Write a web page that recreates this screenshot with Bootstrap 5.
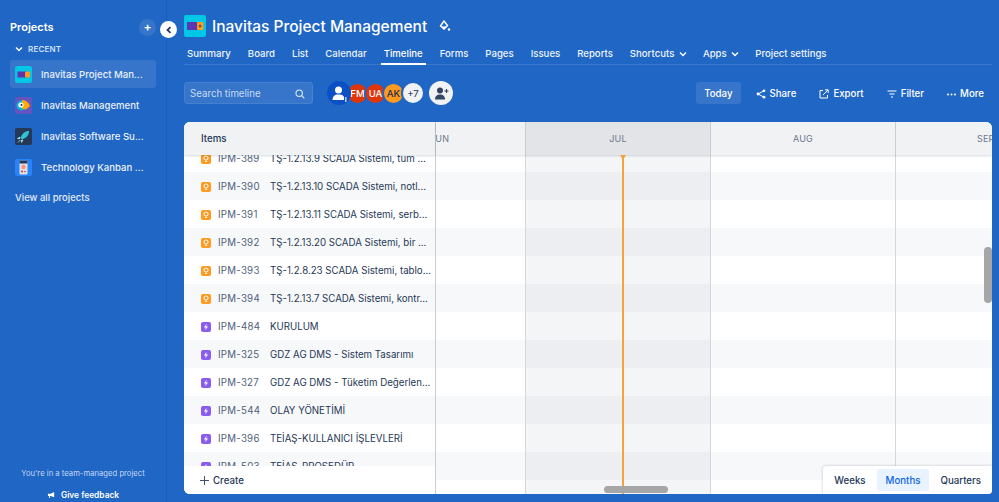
<!DOCTYPE html>
<html lang="en">
<head>
    <meta charset="UTF-8">
    <title>Inavitas Project Management - Timeline</title>
    <link rel="stylesheet" href="https://cdn.jsdelivr.net/npm/bootstrap@5.3.2/dist/css/bootstrap.min.css">
    <style>
        html, body { height: 502px; overflow: hidden; }
        body { font-family: Inter, "Noto Sans", sans-serif; font-size: 9.7px; background: #2066c4; color: #fff; }
        .page-wrap { height: 502px; position: relative; }

        /* sidebar */
        .side-bar { width: 167px; flex: none; background: #2066c4; border-right: 1px solid #1d5db3; padding: 0 10px; }
        .side-title { height: 16px; margin-top: 19px; font-size: 11px; font-weight: 600; }
        .side-add { width: 17px; height: 17px; border-radius: 50%; background: rgba(255,255,255,.1); color: #fff; font-size: 12px; line-height: 16px; text-align: center; }
        .side-collapse { position: absolute; left: 160px; top: 21px; width: 17px; height: 17px; border-radius: 50%; background: #fff; z-index: 5; }
        .side-recent { height: 12px; margin-top: 8px; padding-left: 5px; font-size: 8px; font-weight: 600; color: #cfe0f7; letter-spacing: .2px; gap: 5px; }
        .side-list { margin-top: 5px; }
        .side-item { height: 28px; margin-bottom: 3px; padding-left: 5px; border-radius: 3px; font-size: 9.6px; font-weight: 500; color: #eaf1fb; white-space: nowrap; gap: 9px; }
        .side-item.is-on { background: rgba(255,255,255,.1); }
        .side-item svg { flex: none; }
        .side-item span { padding-top: 2px; }
        .side-all { margin-top: 7px; padding-left: 5px; font-size: 9.5px; font-weight: 500; color: #e1ebf9; }
        .side-foot { margin-top: auto; text-align: center; }
        .side-note { font-size: 7.7px; color: #c4d7f2; margin-bottom: 8px; }
        .side-feedback { font-size: 8.4px; font-weight: 600; height: 14px; gap: 5px; }

        /* project header */
        .main-area { min-width: 0; padding: 15px 7px 8px 17px; }
        .proj-title { height: 22px; font-size: 15.5px; font-weight: 500; white-space: nowrap; }
        .proj-name { margin-left: 6px; padding-top: 2px; }
        .proj-paint { margin-left: 12px; }
        .tab-line { height: 27px; margin-top: 1px; padding-left: 3px; border-bottom: 1px solid #3a78cc; font-size: 9.6px; font-weight: 500; white-space: nowrap; color: #eef4fc; gap: 17px; }
        .tab-item { height: 27px; line-height: 32px; }
        .tab-item.is-on { padding: 0 3px; margin: 0 -3px; border-bottom: 2px solid #fff; color: #fff; }
        .tab-item svg { margin-left: 2px; margin-right: -1px; }
        .tool-line { height: 22px; margin-top: 17px; }
        .find-box { width: 129px; height: 22px; border: 1px solid #4580d0; background: rgba(255,255,255,.1); border-radius: 3px; padding: 2px 7px 0 5px; color: #cadcf5; }
        .ava-row { margin-left: 14px; }
        .ava-dot { width: 23px; height: 23px; border-radius: 50%; margin-right: -5px; border: 2px solid #2066c4; padding-top: 2px; font-size: 9.6px; font-weight: 500; flex: none; }
        .ava-me { width: 24px; height: 24px; padding-top: 0; background: #0b50c4; border-color: #0b50c4; position: relative; z-index: 1; }
        .ava-red { background: #de350b; color: #fff; }
        .ava-amber { background: #ff991f; color: #172b4d; }
        .ava-more { width: 24px; height: 24px; margin-left: 1px; background: #f1f2f4; color: #42526e; }
        .ava-add { width: 24px; height: 24px; border-radius: 50%; background: #f1f2f4; margin-left: 9px; }
        .tool-group { gap: 7px; }
        .tool-btn { height: 22px; padding: 2px 8px 0; border-radius: 3px; font-weight: 500; color: #fff; gap: 4px; }
        .tool-btn.is-on { background: rgba(255,255,255,.1); }

        /* timeline panel */
        .time-panel { height: 372px; margin-top: 18px; background: #fff; border-radius: 6px 6px 4px 6px; overflow: hidden; position: relative; }
        .list-col { width: 252px; flex: none; border-right: 1px solid #c9ced6; background: #fff; position: relative; z-index: 2; }
        .list-head { height: 33px; background: #f1f2f4; padding: 2px 0 0 17px; color: #253858; font-weight: 500; position: relative; z-index: 3; box-shadow: 0 1px 2px rgba(9,30,66,.16); flex: none; }
        .list-rows { flex: 1; min-height: 0; overflow: hidden; margin-top: -11px; }
        .issue-row { height: 28px; padding: 2px 0 0 17px; color: #253858; white-space: nowrap; }
        .issue-row:nth-child(even), .lane-row:nth-child(even) { background: #f7f8f9; }
        .issue-key { width: 52px; margin-left: 7px; color: #505f79; flex: none; letter-spacing: .25px; }
        .list-foot { height: 28px; background: #fff; padding-left: 15px; font-weight: 500; color: #253858; flex: none; position: relative; gap: 3px; }
        .list-foot span { padding-top: 2px; }
        .issue-ico { width: 10px; height: 10px; flex: none; }

        .lane-col { min-width: 0; position: relative; }
        .lane-head { height: 33px; background: #f1f2f4; color: #6b778c; font-size: 9px; letter-spacing: .2px; position: relative; z-index: 3; box-shadow: 0 1px 2px rgba(9,30,66,.16); }
        .month-cell { flex: none; height: 100%; border-right: 1px solid #c9ced6; overflow: hidden; white-space: nowrap; }
        .month-jun { width: 90px; }
        .month-jun span { margin-left: -6px; }
        .month-wide { width: 185px; }
        .month-jul { background: #e3e4e8; }
        .month-sep { padding-left: 81px; }
        .lane-rows { margin-top: -11px; }
        .lane-row { height: 28px; }
        .month-band { position: absolute; top: 33px; bottom: 0; border-right: 1px solid #d3d7de; z-index: 1; }
        .band-jun { left: 0; width: 90px; }
        .band-jul { left: 90px; width: 185px; background: rgba(9,30,66,.045); }
        .band-aug { left: 275px; width: 185px; }
        .today-line { position: absolute; left: 186px; top: 33px; bottom: 0; width: 2px; background: #f0a440; z-index: 4; }
        .today-tip { position: absolute; left: -2px; top: 0; width: 0; height: 0; border-left: 3px solid transparent; border-right: 3px solid transparent; border-top: 5px solid #f0a440; }
        .scroll-y { position: absolute; right: 0; top: 125px; width: 8px; height: 56px; border-radius: 4px; background: #a6a6a6; z-index: 5; }
        .scroll-x { position: absolute; left: 168px; bottom: 1px; width: 64px; height: 7px; border-radius: 4px; background: #a6a6a6; z-index: 5; }
        .range-box { position: absolute; right: 0; bottom: 0; height: 28px; background: #fff; border-radius: 3px 0 0 0; box-shadow: 0 0 3px rgba(9,30,66,.25); padding: 0 2px; z-index: 6; font-weight: 500; color: #253858; }
        .range-btn { height: 22px; padding: 2px 9px 0; border-radius: 3px; }
        .range-btn.is-on { background: #e9f2ff; color: #0c66e4; margin: 0 2px; }
    </style>
</head>

<body>
    <svg width="0" height="0" class="position-absolute">
        <symbol id="ico-idea" viewBox="0 0 10 10">
            <rect width="10" height="10" rx="2" fill="#ff991f"/>
            <circle cx="5" cy="4" r="2.1" fill="none" stroke="#fff" stroke-width="1"/>
            <path d="M4 7.4h2" stroke="#fff" stroke-width="1"/>
        </symbol>
        <symbol id="ico-epic" viewBox="0 0 10 10">
            <rect width="10" height="10" rx="2" fill="#8b5cf0"/>
            <path d="M5.6 1.8 3 5.5h1.8L4.3 8.2 7 4.5H5.2z" fill="#fff"/>
        </symbol>
        <symbol id="ico-down" viewBox="0 0 8 6">
            <path d="M1 1.5 4 4.5 7 1.5" fill="none" stroke="#fff" stroke-width="1.4"/>
        </symbol>
    </svg>

    <div class="page-wrap d-flex">
        <div class="side-bar d-flex flex-column">
            <div class="side-title d-flex justify-content-between align-items-center">
                <span>Projects</span>
                <span class="side-add">+</span>
            </div>
            <div class="side-recent d-flex align-items-center">
                <svg width="8" height="6"><use href="#ico-down"></use></svg>
                <span>RECENT</span>
            </div>
            <div class="side-list">
                <div class="side-item is-on d-flex align-items-center">
                    <svg width="17" height="17" viewBox="0 0 17 17"><rect width="17" height="17" rx="2" fill="#00c7e6"/><rect x="2.5" y="5.5" width="9" height="6" fill="#5e35b1"/><rect x="10" y="5.5" width="5" height="6" rx="1" fill="#ff991f"/></svg>
                    <span>Inavitas Project Man...</span>
                </div>
                <div class="side-item d-flex align-items-center">
                    <svg width="17" height="17" viewBox="0 0 17 17"><rect width="17" height="17" rx="2" fill="#6554c0"/><circle cx="6.5" cy="8.5" r="5" fill="#00b8d9"/><path d="M7 3c4 0 7 3 8 6l-4 3.5-4-1z" fill="#ffab00"/><circle cx="6" cy="8" r="2.6" fill="#fff"/><circle cx="6.5" cy="8" r="1" fill="#172b4d"/></svg>
                    <span>Inavitas Management</span>
                </div>
                <div class="side-item d-flex align-items-center">
                    <svg width="17" height="17" viewBox="0 0 17 17"><rect width="17" height="17" rx="2" fill="#253858"/><path d="M14 3c-4 0-7 2.5-8.5 7l1.5 1.5C11.500 10 14 7 14 3z" fill="#2ec4d6"/><path d="M5 9 2.5 10.500l2 .5zM8 12l-1.500 2.500-.5-2zM5 12l-2 2.500" fill="#b3f0f7" stroke="#b3f0f7" stroke-width=".6"/></svg>
                    <span>Inavitas Software Su...</span>
                </div>
                <div class="side-item d-flex align-items-center">
                    <svg width="17" height="17" viewBox="0 0 17 17"><rect width="17" height="17" rx="2" fill="#2684ff"/><rect x="4.5" y="1.5" width="8" height="14" rx="1" fill="#dfe1e6"/><rect x="4.5" y="1.5" width="8" height="3" fill="#253858"/><circle cx="8.5" cy="8" r="2.2" fill="#ff8f73"/><circle cx="7" cy="12.5" r="1" fill="#de350b"/><circle cx="10" cy="12.5" r=".8" fill="#de350b"/></svg>
                    <span>Technology Kanban ...</span>
                </div>
            </div>
            <div class="side-all">View all projects</div>
            <div class="side-foot">
                <div class="side-note">You're in a team-managed project</div>
                <div class="side-feedback d-flex align-items-center justify-content-center">
                    <svg width="9" height="8" viewBox="0 0 10 9"><path d="M1 3h3l4-2v6L4 5.500H3l.5 2.500h-1L2 5.500H1z" fill="#fff"/></svg>
                    <span>Give feedback</span>
                </div>
            </div>
        </div>
        <div class="side-collapse d-flex align-items-center justify-content-center">
            <svg width="8" height="8" viewBox="0 0 8 8"><path d="M5.5 1.2 2.5 4l3 2.800" fill="none" stroke="#253858" stroke-width="1.8"/></svg>
        </div>

        <div class="main-area flex-grow-1 d-flex flex-column">
            <div class="proj-title d-flex align-items-center">
                <svg width="22" height="22" viewBox="0 0 22 22"><rect width="22" height="22" rx="2" fill="#00c7e6"/><rect x="3" y="7" width="13" height="8" fill="#5e35b1"/><rect x="13" y="7" width="6.5" height="8" rx="1" fill="#ff991f"/><path d="M14.500 11h3M16 9.500v3" stroke="#253858" stroke-width=".8"/></svg>
                <span class="proj-name">Inavitas Project Management</span>
                <svg class="proj-paint" width="12" height="13" viewBox="0 0 12 13"><path d="M5 1 1.500 6l3.500 3 3.500-3.500z" fill="none" stroke="#fff" stroke-width="1.4"/><path d="M2.500 6.500h6L5 9.500z" fill="#fff"/><circle cx="10" cy="9.500" r="1.200" fill="#fff"/></svg>
            </div>
            <div class="tab-line d-flex">
                <span class="tab-item">Summary</span>
                <span class="tab-item">Board</span>
                <span class="tab-item">List</span>
                <span class="tab-item">Calendar</span>
                <span class="tab-item is-on">Timeline</span>
                <span class="tab-item">Forms</span>
                <span class="tab-item">Pages</span>
                <span class="tab-item">Issues</span>
                <span class="tab-item">Reports</span>
                <span class="tab-item">Shortcuts <svg width="8" height="6"><use href="#ico-down"></use></svg></span>
                <span class="tab-item">Apps <svg width="8" height="6"><use href="#ico-down"></use></svg></span>
                <span class="tab-item">Project settings</span>
            </div>
            <div class="tool-line d-flex align-items-center">
                <div class="find-box d-flex align-items-center justify-content-between">
                    <span>Search timeline</span>
                    <svg width="10" height="10" viewBox="0 0 10 10"><circle cx="4.2" cy="4.2" r="3.2" fill="none" stroke="#dbe7f8" stroke-width="1.1"/><path d="M6.700 6.700 9.300 9.300" stroke="#dbe7f8" stroke-width="1.1"/></svg>
                </div>
                <div class="ava-row d-flex align-items-center">
                    <div class="ava-dot ava-me d-flex align-items-center justify-content-center">
                        <svg width="17" height="19" viewBox="0 0 17 19"><circle cx="7.5" cy="6" r="3.5" fill="#fff"/><path d="M1.500 16c0-3.500 2-5.500 6-5.500s5.500 1.500 5.500 3V16z" fill="#fff"/><rect x="14" y="13" width="1.5" height="5" fill="#b8d0f5"/></svg>
                    </div>
                    <div class="ava-dot ava-red d-flex align-items-center justify-content-center">FM</div>
                    <div class="ava-dot ava-red d-flex align-items-center justify-content-center">UA</div>
                    <div class="ava-dot ava-amber d-flex align-items-center justify-content-center">AK</div>
                    <div class="ava-dot ava-more d-flex align-items-center justify-content-center">+7</div>
                    <div class="ava-add d-flex align-items-center justify-content-center">
                        <svg width="15" height="13" viewBox="0 0 15 13"><circle cx="6" cy="3.5" r="3" fill="#344563"/><path d="M1 12.500c0-3.500 2-5 5-5s5 1.500 5 5z" fill="#344563"/><path d="M12.500 2v4M10.500 4h4" stroke="#344563" stroke-width="1.2"/></svg>
                    </div>
                </div>
                <div class="tool-group ms-auto d-flex align-items-center">
                    <div class="tool-btn is-on d-flex align-items-center">Today</div>
                    <div class="tool-btn d-flex align-items-center">
                        <svg width="10" height="10" viewBox="0 0 10 10"><circle cx="2" cy="5" r="1.4" fill="#fff"/><circle cx="8" cy="1.8" r="1.4" fill="#fff"/><circle cx="8" cy="8.2" r="1.4" fill="#fff"/><path d="M8 1.8 2 5l6 3.200" fill="none" stroke="#fff"/></svg>
                        <span>Share</span>
                    </div>
                    <div class="tool-btn d-flex align-items-center">
                        <svg width="10" height="10" viewBox="0 0 10 10"><path d="M4 1.500H1v7.500h7.500V6" fill="none" stroke="#fff"/><path d="M4 6 9 1M6 .8h3.200V4" fill="none" stroke="#fff"/></svg>
                        <span>Export</span>
                    </div>
                    <div class="tool-btn d-flex align-items-center">
                        <svg width="10" height="8" viewBox="0 0 10 8"><path d="M.5 1h9M2.500 4h5M4 7h2" stroke="#fff"/></svg>
                        <span>Filter</span>
                    </div>
                    <div class="tool-btn d-flex align-items-center">
                        <svg width="9" height="3" viewBox="0 0 9 3"><circle cx="1" cy="1.5" r="1" fill="#fff"/><circle cx="4.5" cy="1.5" r="1" fill="#fff"/><circle cx="8" cy="1.5" r="1" fill="#fff"/></svg>
                        <span>More</span>
                    </div>
                </div>
            </div>

            <div class="time-panel d-flex">
                <div class="list-col d-flex flex-column">
                    <div class="list-head d-flex align-items-center">Items</div>
                    <div class="list-rows" id="issueRows"></div>
                    <div class="list-foot d-flex align-items-center">
                        <svg width="11" height="11" viewBox="0 0 11 11"><path d="M5.500 1v9M1 5.500h9" stroke="#42526e"/></svg>
                        <span>Create</span>
                    </div>
                </div>
                <div class="lane-col flex-grow-1">
                    <div class="lane-head d-flex align-items-center">
                        <div class="month-cell month-jun d-flex align-items-center"><span>JUN</span></div>
                        <div class="month-cell month-wide month-jul d-flex align-items-center justify-content-center">JUL</div>
                        <div class="month-cell month-wide d-flex align-items-center justify-content-center">AUG</div>
                        <div class="month-sep flex-grow-1 d-flex align-items-center"><span>SEP</span></div>
                    </div>
                    <div class="lane-rows" id="laneRows"></div>
                    <div class="month-band band-jun"></div>
                    <div class="month-band band-jul"></div>
                    <div class="month-band band-aug"></div>
                    <div class="today-line"><div class="today-tip"></div></div>
                    <div class="scroll-y"></div>
                    <div class="scroll-x"></div>
                    <div class="range-box d-flex align-items-center">
                        <div class="range-btn d-flex align-items-center">Weeks</div>
                        <div class="range-btn is-on d-flex align-items-center">Months</div>
                        <div class="range-btn d-flex align-items-center">Quarters</div>
                    </div>
                </div>
            </div>
        </div>
    </div>

    <script src="https://cdn.jsdelivr.net/npm/bootstrap@5.3.2/dist/js/bootstrap.bundle.min.js"></script>
    <script>
        const issues = [
            ['idea', 'IPM-389', 'TŞ-1.2.13.9 SCADA Sistemi, tüm ...'],
            ['idea', 'IPM-390', 'TŞ-1.2.13.10 SCADA Sistemi, notl...'],
            ['idea', 'IPM-391', 'TŞ-1.2.13.11 SCADA Sistemi, serb...'],
            ['idea', 'IPM-392', 'TŞ-1.2.13.20 SCADA Sistemi, bir ...'],
            ['idea', 'IPM-393', 'TŞ-1.2.8.23 SCADA Sistemi, tablo...'],
            ['idea', 'IPM-394', 'TŞ-1.2.13.7 SCADA Sistemi, kontr...'],
            ['epic', 'IPM-484', 'KURULUM'],
            ['epic', 'IPM-325', 'GDZ AG DMS - Sistem Tasarımı'],
            ['epic', 'IPM-327', 'GDZ AG DMS - Tüketim Değerlen...'],
            ['epic', 'IPM-544', 'OLAY YÖNETİMİ'],
            ['epic', 'IPM-396', 'TEİAŞ-KULLANICI İŞLEVLERİ'],
            ['epic', 'IPM-503', 'TEİAŞ-PROSEDÜR']
        ];
        const issueRows = document.getElementById('issueRows');
        const laneRows = document.getElementById('laneRows');

        issues.forEach(function (item) {
            const row = document.createElement('div');
            row.className = 'issue-row d-flex align-items-center';
            row.innerHTML = `
                <svg class="issue-ico"><use href="#ico-${item[0]}"></use></svg>
                <span class="issue-key">${item[1]}</span>
                <span>${item[2]}</span>`;
            issueRows.appendChild(row);

            const lane = document.createElement('div');
            lane.className = 'lane-row';
            laneRows.appendChild(lane);
        });
    </script>
</body>
</html>
